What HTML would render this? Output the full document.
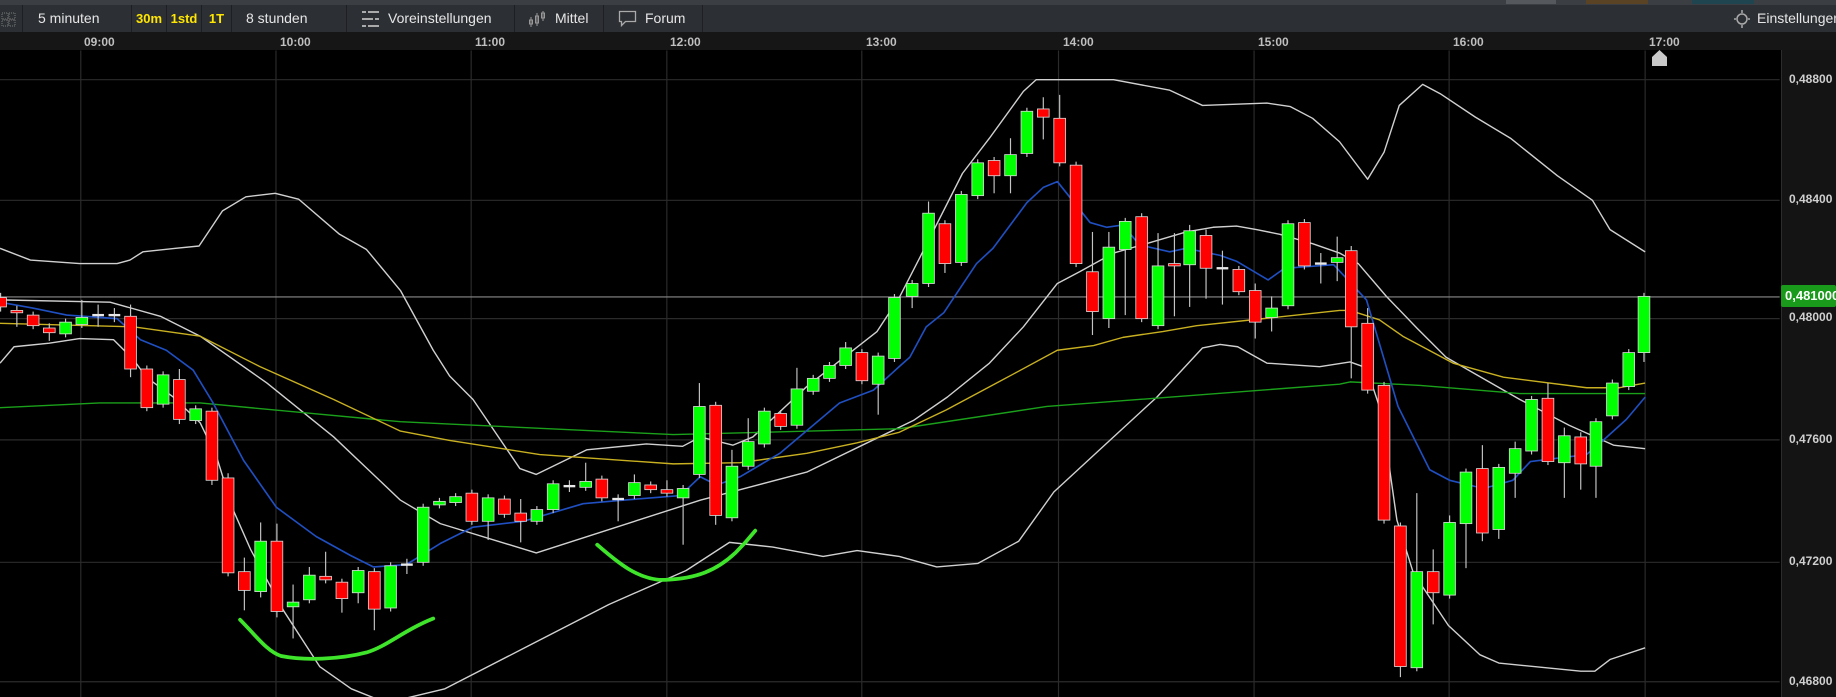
<!DOCTYPE html>
<html><head><meta charset="utf-8"><style>
html,body{margin:0;padding:0;background:#000;width:1836px;height:697px;overflow:hidden;font-family:"Liberation Sans",sans-serif}
#top{position:absolute;left:0;top:0;width:1836px;height:5px;background:#3b3e42;border-bottom:1px solid #1c1e20}
#tb{position:absolute;left:0;top:5px;width:1836px;height:27px;background:#2c2f33}
.b{position:absolute;top:0;height:27px;line-height:27px;color:#e6e6e6;font-size:14px;border-right:1px solid #1d1f22;box-sizing:border-box}
.y{color:#ffe600;font-weight:bold;font-size:13px;text-align:center}
#ta{position:absolute;left:0;top:32px;width:1836px;height:18px;background:#161616}
.t{position:absolute;top:35px;color:#bfbfbf;font-size:12px;font-weight:bold}
#pa{position:absolute;left:1781px;top:50px;width:55px;height:647px;background:#141414;border-left:1px solid #2c2c2c}
.p{position:absolute;left:1789px;color:#cfcfcf;font-size:12px;font-weight:bold;white-space:nowrap}
svg{position:absolute;left:0;top:0}
.r{fill:#ff0000;stroke:#d8d8d8;stroke-width:.7}
.g{fill:#00ff00;stroke:#d8d8d8;stroke-width:.7}
.w{fill:#e8e8e8;stroke:none}
.k line{stroke:#c4c4c4;stroke-width:1}
</style></head><body>
<div id="top"></div>
<div style="position:absolute;left:1506px;top:0;width:50px;height:4px;background:#55585c"></div>
<div style="position:absolute;left:1586px;top:0;width:62px;height:4px;background:#5a4224"></div>
<div style="position:absolute;left:1692px;top:0;width:62px;height:4px;background:#1f4650"></div>
<div id="tb">
 <div class="b" style="left:0;width:23px"><svg width="23" height="27" style="position:static"><rect x="2" y="8" width="6" height="6" fill="none" stroke="#777" stroke-dasharray="1,1"/><rect x="9" y="8" width="6" height="6" fill="none" stroke="#777" stroke-dasharray="1,1"/><rect x="2" y="15" width="6" height="6" fill="none" stroke="#777" stroke-dasharray="1,1"/><rect x="9" y="15" width="6" height="6" fill="none" stroke="#777" stroke-dasharray="1,1"/></svg></div>
 <div class="b" style="left:23px;width:109px;padding-left:15px">5 minuten</div>
 <div class="b y" style="left:132px;width:35px">30m</div>
 <div class="b y" style="left:167px;width:35px">1std</div>
 <div class="b y" style="left:202px;width:30px">1T</div>
 <div class="b" style="left:232px;width:115px;padding-left:14px">8 stunden</div>
 <div class="b" style="left:347px;width:168px;padding-left:41px">Voreinstellungen
  <svg width="20" height="20" style="left:14px;top:4px"><g stroke="#aaa" stroke-width="2"><line x1="1" y1="3" x2="18" y2="3"/><line x1="1" y1="10" x2="18" y2="10"/><line x1="1" y1="17" x2="18" y2="17"/></g><g stroke="#2c2f33" stroke-width="2"><line x1="6" y1="1" x2="6" y2="5"/><line x1="13" y1="8" x2="13" y2="12"/><line x1="6" y1="15" x2="6" y2="19"/></g></svg></div>
 <div class="b" style="left:515px;width:89px;padding-left:40px">Mittel
  <svg width="20" height="20" style="left:13px;top:4px"><g stroke="#999" fill="none" stroke-width="1"><line x1="3" y1="8" x2="3" y2="18"/><rect x="1.5" y="11" width="3" height="4"/><line x1="9" y1="4" x2="9" y2="17"/><rect x="7.5" y="7" width="3" height="7"/><line x1="15" y1="2" x2="15" y2="12"/><rect x="13.5" y="4" width="3" height="5"/></g></svg></div>
 <div class="b" style="left:604px;width:99px;padding-left:41px">Forum
  <svg width="20" height="20" style="left:14px;top:4px"><path d="M1.5 2.5h16v10h-10l-4 4v-4h-2z" fill="none" stroke="#aaa" stroke-width="1.3"/></svg></div>
 <div class="b" style="left:1726px;width:110px;padding-left:31px;border:none">Einstellungen
  <svg width="18" height="20" style="left:7px;top:4px"><circle cx="9" cy="10" r="5" fill="none" stroke="#aaa" stroke-width="1.5"/><g stroke="#aaa" stroke-width="1.5"><line x1="9" y1="1" x2="9" y2="4"/><line x1="9" y1="16" x2="9" y2="19"/><line x1="1" y1="10" x2="3" y2="10"/><line x1="15" y1="10" x2="17" y2="10"/></g></svg></div>
</div>
<div id="ta"></div>
<div class="t" style="left:84px">09:00</div><div class="t" style="left:280px">10:00</div><div class="t" style="left:475px">11:00</div><div class="t" style="left:670px">12:00</div><div class="t" style="left:866px">13:00</div><div class="t" style="left:1063px">14:00</div><div class="t" style="left:1258px">15:00</div><div class="t" style="left:1453px">16:00</div><div class="t" style="left:1649px">17:00</div>
<div id="pa"></div>
<svg width="1836" height="697" viewBox="0 0 1836 697">
<defs><clipPath id="c"><rect x="0" y="43" width="1520" height="560"/></clipPath></defs>
<g transform="scale(1.17092,1.17143)" clip-path="url(#c)">
<g stroke="#2b2b2b" stroke-width="1">
<line x1="0" y1="68" x2="1520" y2="68"/><line x1="0" y1="171" x2="1520" y2="171"/><line x1="0" y1="272" x2="1520" y2="272"/><line x1="0" y1="375.5" x2="1520" y2="375.5"/><line x1="0" y1="480" x2="1520" y2="480"/><line x1="0" y1="582" x2="1520" y2="582"/>
<line x1="69" y1="43" x2="69" y2="600"/><line x1="235.7" y1="43" x2="235.7" y2="600"/><line x1="402.4" y1="43" x2="402.4" y2="600"/><line x1="569.5" y1="43" x2="569.5" y2="600"/><line x1="736" y1="43" x2="736" y2="600"/><line x1="904" y1="43" x2="904" y2="600"/><line x1="1071" y1="43" x2="1071" y2="600"/><line x1="1237.6" y1="43" x2="1237.6" y2="600"/><line x1="1405" y1="43" x2="1405" y2="600"/>
</g>
<line x1="0" y1="253.5" x2="1520" y2="253.5" stroke="#8a8a8a" stroke-width="1"/>
<g fill="none" stroke-width="1.2" stroke-linejoin="round">
<polyline stroke="#d0d0d0" points="0,212 26,222 68,225 100,225 111,222 122,215 150,212 170,210 190,180 210,168 235,165 255,170 290,200 313,213 342,248 370,299 384,321 404,341 444,400 458,405 501,384 552,379 583,381 598,373 626,380 643,373 689,330 749,283 768,254 786,219 822,148 845,118 874,78 885,68 951,68 999,77 1027,90 1082,88 1102,91 1121,101 1144,121 1168,153 1182,130 1195,90 1215,72 1230,80 1260,100 1290,118 1330,150 1360,171 1375,196 1405,215"/>
<polyline stroke="#d0d0d0" points="0,256 94,258 137,270 171,287 228,327 285,373 342,427 376,447 458,472 598,427 689,403 751,373 780,359 809,339 845,310 874,279 903,242 922,232 951,216 979,208 1013,198 1036,194 1056,193 1073,196 1093,200 1121,208 1144,216 1160,225 1184,253 1210,280 1235,305 1270,325 1298,341 1340,363 1378,380 1405,383"/>
<polyline stroke="#d0d0d0" points="0,310 12,296 42,293 68,289 97,290 114,307 125,322 148,339 171,361 185,390 199,435 214,469 242,521 273,569 300,588 330,600 380,588 450,552 520,516 586,487 623,463 660,467 703,475 732,470 768,475 800,484 835,481 870,462 900,420 939,384 988,339 1027,297 1042,294 1057,296 1082,310 1127,313 1153,309 1167,314 1180,353 1193,444 1207,489 1237,534 1264,559 1280,566 1350,573 1362,573 1375,563 1405,553"/>
<polyline stroke="#1aa01a" points="0,348 85,344 171,344 256,352 342,360 384,362 575,371 768,366 894,347 1144,328 1153,326 1213,329 1298,336 1405,336"/>
<polyline stroke="#c8b020" points="0,276 114,279 171,287 222,313 285,341 342,368 384,376 461,388 575,396 632,395 689,387 732,378 768,369 808,350 866,319 903,299 934,295 959,288 993,283 1022,278 1079,272 1144,265 1153,265 1178,273 1198,287 1241,310 1284,322 1355,331 1383,331 1405,327"/>
<polyline stroke="#1f4fc0" stroke-width="1.4" points="0,258 28,263 57,269 100,272 120,290 142,299 165,316 182,344 208,393 236,433 270,458 299,474 319,484 347,482 376,464 404,450 447,445 498,430 532,427 581,423 598,407 612,414 632,407 666,387 717,344 746,333 769,312 777,305 791,279 806,267 834,225 848,212 877,173 891,160 903,155 931,190 945,194 959,192 973,209 999,215 1013,212 1042,218 1056,223 1083,239 1097,229 1139,226 1167,256 1194,347 1221,401 1238,410 1267,417 1292,410 1307,394 1355,388 1369,376 1389,358 1405,339"/>
</g>
<g class="k">
<line x1="0.5" y1="250" x2="0.5" y2="266"/><line x1="14.4" y1="261" x2="14.4" y2="279"/><line x1="28.3" y1="266" x2="28.3" y2="281"/><line x1="42.1" y1="276" x2="42.1" y2="291"/><line x1="56" y1="272" x2="56" y2="288"/><line x1="69.9" y1="256" x2="69.9" y2="280"/><line x1="83.8" y1="260" x2="83.8" y2="279"/><line x1="97.7" y1="263" x2="97.7" y2="275"/><line x1="111.5" y1="260" x2="111.5" y2="322"/><line x1="125.4" y1="312" x2="125.4" y2="351"/><line x1="139.3" y1="317" x2="139.3" y2="348"/><line x1="153.2" y1="315" x2="153.2" y2="362"/><line x1="167.1" y1="346" x2="167.1" y2="362"/><line x1="181" y1="348" x2="181" y2="414"/><line x1="194.8" y1="404" x2="194.8" y2="492"/><line x1="208.7" y1="476" x2="208.7" y2="521"/><line x1="222.6" y1="446" x2="222.6" y2="510"/><line x1="236.5" y1="447" x2="236.5" y2="527"/><line x1="250.3" y1="499" x2="250.3" y2="545"/><line x1="264.2" y1="484" x2="264.2" y2="515"/><line x1="278.1" y1="471" x2="278.1" y2="498"/><line x1="292" y1="494" x2="292" y2="523"/><line x1="305.9" y1="484" x2="305.9" y2="515"/><line x1="319.7" y1="485" x2="319.7" y2="538"/><line x1="333.6" y1="480" x2="333.6" y2="522"/><line x1="347.5" y1="477" x2="347.5" y2="490"/><line x1="361.4" y1="430" x2="361.4" y2="483"/><line x1="375.3" y1="425" x2="375.3" y2="434"/><line x1="389.1" y1="421" x2="389.1" y2="432"/><line x1="403" y1="418" x2="403" y2="448"/><line x1="416.9" y1="422" x2="416.9" y2="461"/><line x1="430.8" y1="423" x2="430.8" y2="442"/><line x1="444.7" y1="426" x2="444.7" y2="463"/><line x1="458.5" y1="432" x2="458.5" y2="448"/><line x1="472.4" y1="410" x2="472.4" y2="438"/><line x1="486.3" y1="410" x2="486.3" y2="420"/><line x1="500.2" y1="395" x2="500.2" y2="419"/><line x1="514" y1="406" x2="514" y2="428"/><line x1="527.9" y1="422" x2="527.9" y2="445"/><line x1="541.8" y1="405" x2="541.8" y2="426"/><line x1="555.7" y1="411" x2="555.7" y2="421"/><line x1="569.6" y1="410" x2="569.6" y2="424"/><line x1="583.4" y1="414" x2="583.4" y2="465"/><line x1="597.3" y1="327" x2="597.3" y2="408"/><line x1="611.2" y1="343" x2="611.2" y2="448"/><line x1="625.1" y1="384" x2="625.1" y2="445"/><line x1="639" y1="357" x2="639" y2="401"/><line x1="652.8" y1="348" x2="652.8" y2="382"/><line x1="666.7" y1="350" x2="666.7" y2="367"/><line x1="680.6" y1="314" x2="680.6" y2="366"/><line x1="694.5" y1="320" x2="694.5" y2="337"/><line x1="708.4" y1="309" x2="708.4" y2="326"/><line x1="722.2" y1="292" x2="722.2" y2="315"/><line x1="736.1" y1="298" x2="736.1" y2="328"/><line x1="750" y1="301" x2="750" y2="354"/><line x1="763.9" y1="251" x2="763.9" y2="309"/><line x1="779" y1="239" x2="779" y2="263"/><line x1="793" y1="172" x2="793" y2="245"/><line x1="807" y1="188" x2="807" y2="233"/><line x1="821" y1="163" x2="821" y2="227"/><line x1="835" y1="136" x2="835" y2="170"/><line x1="849" y1="134" x2="849" y2="165"/><line x1="863" y1="118" x2="863" y2="165"/><line x1="877" y1="92" x2="877" y2="134"/><line x1="891" y1="83" x2="891" y2="119"/><line x1="905" y1="81" x2="905" y2="142"/><line x1="919" y1="138" x2="919" y2="228"/><line x1="933" y1="198" x2="933" y2="286"/><line x1="947" y1="198" x2="947" y2="280"/><line x1="961" y1="186" x2="961" y2="269"/><line x1="975" y1="182" x2="975" y2="275"/><line x1="989" y1="199" x2="989" y2="281"/><line x1="1003" y1="199" x2="1003" y2="270"/><line x1="1016" y1="192" x2="1016" y2="262"/><line x1="1030" y1="196" x2="1030" y2="255"/><line x1="1044" y1="214" x2="1044" y2="260"/><line x1="1058" y1="227" x2="1058" y2="252"/><line x1="1072" y1="242" x2="1072" y2="289"/><line x1="1086" y1="253" x2="1086" y2="283"/><line x1="1100" y1="188" x2="1100" y2="264"/><line x1="1114" y1="187" x2="1114" y2="230"/><line x1="1128" y1="216" x2="1128" y2="242"/><line x1="1142" y1="202" x2="1142" y2="240"/><line x1="1154" y1="210" x2="1154" y2="323"/><line x1="1168" y1="263" x2="1168" y2="336"/><line x1="1182" y1="326" x2="1182" y2="447"/><line x1="1196" y1="446" x2="1196" y2="578"/><line x1="1210" y1="421" x2="1210" y2="573"/><line x1="1224" y1="469" x2="1224" y2="533"/><line x1="1238" y1="440" x2="1238" y2="511"/><line x1="1252" y1="400" x2="1252" y2="485"/><line x1="1266" y1="380" x2="1266" y2="462"/><line x1="1280" y1="396" x2="1280" y2="460"/><line x1="1294" y1="377" x2="1294" y2="425"/><line x1="1308" y1="338" x2="1308" y2="388"/><line x1="1322" y1="327" x2="1322" y2="397"/><line x1="1336" y1="365" x2="1336" y2="425"/><line x1="1350" y1="369" x2="1350" y2="418"/><line x1="1363" y1="357" x2="1363" y2="425"/><line x1="1377" y1="324" x2="1377" y2="358"/><line x1="1391" y1="298" x2="1391" y2="333"/><line x1="1404" y1="250" x2="1404" y2="309"/>
</g>
<rect class="r" x="-4.5" y="254" width="10" height="8"/><rect class="r" x="9.4" y="265" width="10" height="2"/><rect class="r" x="23.3" y="269" width="10" height="9"/><rect class="r" x="37.1" y="280" width="10" height="4"/><rect class="g" x="51" y="275" width="10" height="10"/><rect class="g" x="64.9" y="271" width="10" height="6"/><rect class="w" x="78.8" y="268" width="10" height="2"/><rect class="w" x="92.7" y="268" width="10" height="2"/><rect class="r" x="106.5" y="270" width="10" height="45"/><rect class="r" x="120.4" y="315" width="10" height="33"/><rect class="g" x="134.3" y="320" width="10" height="25"/><rect class="r" x="148.2" y="324" width="10" height="34"/><rect class="g" x="162.1" y="349" width="10" height="10"/><rect class="r" x="176" y="351" width="10" height="59"/><rect class="r" x="189.8" y="408" width="10" height="81"/><rect class="r" x="203.7" y="488" width="10" height="16"/><rect class="g" x="217.6" y="462" width="10" height="43"/><rect class="r" x="231.5" y="462" width="10" height="60"/><rect class="g" x="245.3" y="514" width="10" height="4"/><rect class="g" x="259.2" y="491" width="10" height="21"/><rect class="r" x="273.1" y="492" width="10" height="3"/><rect class="r" x="287" y="497" width="10" height="14"/><rect class="g" x="300.9" y="487" width="10" height="19"/><rect class="r" x="314.7" y="488" width="10" height="32"/><rect class="g" x="328.6" y="483" width="10" height="36"/><rect class="w" x="342.5" y="481" width="10" height="2"/><rect class="g" x="356.4" y="433" width="10" height="47"/><rect class="g" x="370.3" y="428" width="10" height="3"/><rect class="g" x="384.1" y="424" width="10" height="5"/><rect class="r" x="398" y="421" width="10" height="24"/><rect class="g" x="411.9" y="425" width="10" height="20"/><rect class="r" x="425.8" y="426" width="10" height="13"/><rect class="r" x="439.7" y="438" width="10" height="7"/><rect class="g" x="453.5" y="435" width="10" height="10"/><rect class="g" x="467.4" y="413" width="10" height="22"/><rect class="w" x="481.3" y="414" width="10" height="2"/><rect class="g" x="495.2" y="411" width="10" height="5"/><rect class="r" x="509" y="409" width="10" height="16"/><rect class="w" x="522.9" y="425" width="10" height="2"/><rect class="g" x="536.8" y="412" width="10" height="11"/><rect class="r" x="550.7" y="414" width="10" height="4"/><rect class="r" x="564.6" y="418" width="10" height="3"/><rect class="g" x="578.4" y="417" width="10" height="8"/><rect class="g" x="592.3" y="347" width="10" height="58"/><rect class="r" x="606.2" y="346" width="10" height="94"/><rect class="g" x="620.1" y="398" width="10" height="44"/><rect class="g" x="634" y="377" width="10" height="21"/><rect class="g" x="647.8" y="351" width="10" height="28"/><rect class="r" x="661.7" y="353" width="10" height="11"/><rect class="g" x="675.6" y="332" width="10" height="31"/><rect class="g" x="689.5" y="323" width="10" height="11"/><rect class="g" x="703.4" y="312" width="10" height="11"/><rect class="g" x="717.2" y="297" width="10" height="15"/><rect class="r" x="731.1" y="301" width="10" height="24"/><rect class="g" x="745" y="304" width="10" height="24"/><rect class="g" x="758.9" y="254" width="10" height="52"/><rect class="g" x="774" y="242" width="10" height="11"/><rect class="g" x="788" y="182" width="10" height="60"/><rect class="r" x="802" y="191" width="10" height="34"/><rect class="g" x="816" y="166" width="10" height="58"/><rect class="g" x="830" y="139" width="10" height="28"/><rect class="r" x="844" y="137" width="10" height="13"/><rect class="g" x="858" y="132" width="10" height="18"/><rect class="g" x="872" y="95" width="10" height="36"/><rect class="r" x="886" y="93" width="10" height="7"/><rect class="r" x="900" y="101" width="10" height="38"/><rect class="r" x="914" y="141" width="10" height="84"/><rect class="r" x="928" y="232" width="10" height="34"/><rect class="g" x="942" y="211" width="10" height="61"/><rect class="g" x="956" y="189" width="10" height="24"/><rect class="r" x="970" y="185" width="10" height="87"/><rect class="g" x="984" y="227" width="10" height="51"/><rect class="r" x="998" y="225" width="10" height="2"/><rect class="g" x="1011" y="197" width="10" height="29"/><rect class="r" x="1025" y="201" width="10" height="28"/><rect class="w" x="1039" y="228" width="10" height="2"/><rect class="r" x="1053" y="230" width="10" height="19"/><rect class="r" x="1067" y="248" width="10" height="27"/><rect class="g" x="1081" y="263" width="10" height="8"/><rect class="g" x="1095" y="191" width="10" height="70"/><rect class="r" x="1109" y="190" width="10" height="37"/><rect class="w" x="1123" y="224" width="10" height="2"/><rect class="g" x="1137" y="220" width="10" height="4"/><rect class="r" x="1149" y="214" width="10" height="65"/><rect class="r" x="1163" y="276" width="10" height="57"/><rect class="r" x="1177" y="329" width="10" height="115"/><rect class="r" x="1191" y="449" width="10" height="120"/><rect class="g" x="1205" y="488" width="10" height="82"/><rect class="r" x="1219" y="488" width="10" height="18"/><rect class="g" x="1233" y="446" width="10" height="62"/><rect class="g" x="1247" y="403" width="10" height="44"/><rect class="r" x="1261" y="400" width="10" height="55"/><rect class="g" x="1275" y="399" width="10" height="53"/><rect class="g" x="1289" y="383" width="10" height="21"/><rect class="g" x="1303" y="341" width="10" height="44"/><rect class="r" x="1317" y="340" width="10" height="54"/><rect class="g" x="1331" y="372" width="10" height="23"/><rect class="r" x="1345" y="373" width="10" height="23"/><rect class="g" x="1358" y="360" width="10" height="38"/><rect class="g" x="1372" y="327" width="10" height="28"/><rect class="g" x="1386" y="301" width="10" height="29"/><rect class="g" x="1399" y="253" width="10" height="48"/>
<g fill="none" stroke="#3ee52a" stroke-width="3.2" stroke-linecap="round">
<path d="M205 529 C218 542 228 556 240 560 C260 564 290 563 313 557 C330 552 345 538 370 528"/>
<path d="M510 465 C525 478 545 496 568 495 C595 494 612 487 628 472 C636 464 641 458 645 453"/>
</g>
</g>
<path d="M1652 57 L1659.5 50 L1667 57 L1667 66 L1652 66 Z" fill="#c8c8c8"/>
<rect x="1781" y="285" width="55" height="22" rx="2" fill="#1a9a1a"/>
</svg>
<div class="p" style="top:72px">0,48800</div>
<div class="p" style="top:192px">0,48400</div>
<div class="p" style="top:310px">0,48000</div>
<div class="p" style="top:432px">0,47600</div>
<div class="p" style="top:554px">0,47200</div>
<div class="p" style="top:674px">0,46800</div>
<div class="p" style="top:288px;left:1785px;color:#fff;font-size:13px">0,481000</div>
</body></html>
